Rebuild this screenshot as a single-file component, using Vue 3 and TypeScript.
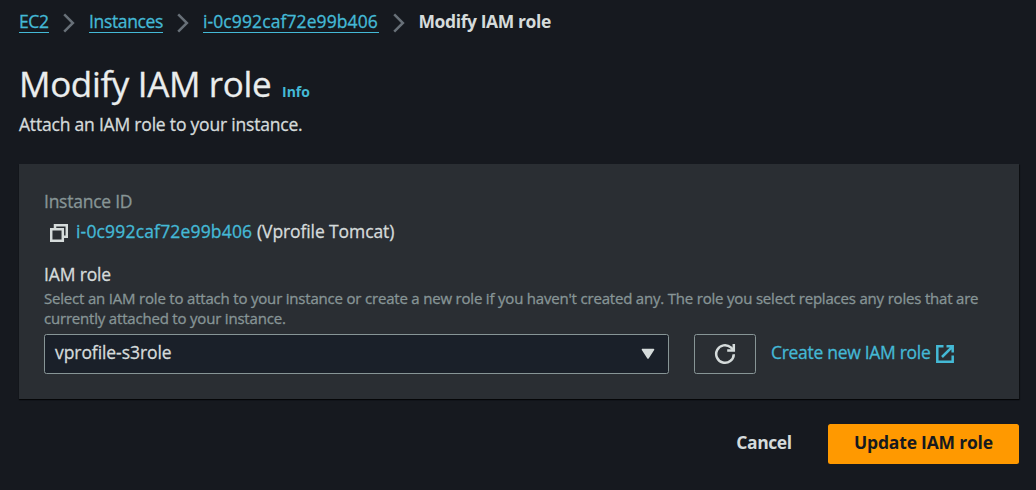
<script setup lang="ts">
import { ref } from 'vue'

interface Crumb {
  label: string
  key: string
}

const instanceId = 'i-0c992caf72e99b406'
const crumbs: Crumb[] = [
  { label: 'EC2', key: 'service' },
  { label: 'Instances', key: 'list' },
  { label: instanceId, key: 'instance' },
]
const selectedRole = ref('vprofile-s3role')
</script>

<template>
  <main class="page">
    <nav class="crumbs">
      <template v-for="crumb in crumbs" :key="crumb.key">
        <a class="crumb" :class="crumb.key">{{ crumb.label }}</a>
        <svg class="chevron" width="12" height="20" viewBox="0 0 12 20">
          <path d="M1.2 1.3 9.9 10 1.2 18.7" />
        </svg>
      </template>
      <span class="current">Modify IAM role</span>
    </nav>

    <header class="heading">
      <h1>Modify IAM role</h1>
      <a class="info">Info</a>
    </header>
    <p class="lead">Attach an IAM role to your instance.</p>

    <section class="panel">
      <div class="label">Instance ID</div>
      <div class="instance-row">
        <svg class="copy" width="18" height="18" viewBox="0 0 18 18">
          <path d="M5 4.5V1.2h11.8v11.6H13.5M1.2 5.2h11.6v11.6H1.2z" />
        </svg>
        <a class="id">{{ instanceId }}</a>
        <span class="name">(Vprofile Tomcat)</span>
      </div>
      <div class="role-label">IAM role</div>
      <p class="hint">
        <span>Select an IAM role to attach to your instance or create a new role if you haven't created any. The role you select replaces any roles that are</span><br />
        <span>currently attached to your instance.</span>
      </p>
      <div class="controls">
        <button class="select" type="button">
          <span class="value">{{ selectedRole }}</span>
          <svg width="14" height="12" viewBox="0 0 14 12">
            <path class="caret" d="M1.5 1.5h11L7 10z" />
          </svg>
        </button>
        <button class="refresh" type="button" aria-label="Refresh">
          <svg width="22" height="22" viewBox="0 0 22 22">
            <path d="M19.8 11.3A8.8 8.8 0 1 1 16.8 4.4L19.5 7.2" />
            <path d="M19.8 1v6.4h-6.6" />
          </svg>
        </button>
        <a class="create">
          <span>Create new IAM role</span>
          <svg width="18" height="18" viewBox="0 0 18 18">
            <path d="M7.5 1.3H1.3v15.4h15.4v-6.2M10.5 1.3h6.2v6.2M16.2 1.8 6 12" />
          </svg>
        </a>
      </div>
    </section>

    <footer class="actions">
      <button class="cancel" type="button">Cancel</button>
      <button class="update" type="button">Update IAM role</button>
    </footer>
  </main>
</template>

<style>
body {
  background: #16191f;
}
</style>

<style scoped>
.page {
  box-sizing: border-box;
  height: 490px;
  padding: 11px 17px 0 19px;
  overflow: hidden;
  background: #16191f;
  color: #d5dbdb;
  font-family: 'Open Sans', 'Noto Sans', sans-serif;
  font-size: 17.5px;
  line-height: 22px;
  white-space: nowrap;
  -webkit-text-stroke: 0.3px currentColor;
}
button {
  font: inherit;
  color: inherit;
  background: none;
  border: 0;
  padding: 0;
}
svg {
  flex: none;
  fill: none;
  stroke: currentColor;
  stroke-width: 2.5;
}
a {
  color: #44b9d6;
}
.crumbs {
  display: flex;
  align-items: flex-start;
  height: 24px;
}
.crumb {
  box-sizing: border-box;
  height: 22px;
  line-height: 21px;
  border-bottom: 1px solid #44b9d6;
}
.service {
  width: 30px;
  letter-spacing: -0.4px;
}
.list {
  width: 74px;
  letter-spacing: -0.35px;
}
.instance {
  width: 175.5px;
  letter-spacing: 0.1px;
}
.chevron {
  margin: 2px 14px 0;
  color: #687078;
}
.current {
  line-height: 21px;
  font-weight: 700;
  letter-spacing: -0.4px;
  -webkit-text-stroke: 0;
}
.heading {
  display: flex;
  align-items: baseline;
  height: 50px;
  margin-top: 24px;
}
h1 {
  margin: 0;
  width: 263px;
  font-size: 35px;
  font-weight: 400;
  line-height: 50px;
  letter-spacing: -0.35px;
  color: #eaeded;
}
.info {
  font-size: 14px;
  line-height: 20px;
  font-weight: 700;
  -webkit-text-stroke: 0;
}
.lead {
  margin: 4px 0 0;
  height: 22px;
  letter-spacing: -0.2px;
}
.panel {
  box-sizing: border-box;
  width: 1000px;
  height: 235px;
  margin-top: 29px;
  padding: 26px 25px 0;
  background: #2a2e33;
  box-shadow: 0 1px 1px rgba(0, 0, 0, 0.6), 1px 1px 1px rgba(0, 0, 0, 0.35);
}
.label {
  color: #879596;
  letter-spacing: -0.25px;
}
.instance-row {
  display: flex;
  align-items: center;
  height: 22px;
  margin-top: 8px;
}
.copy {
  margin: 3px 8px 0 6px;
}
.id {
  width: 181px;
  letter-spacing: 0.17px;
}
.name {
  letter-spacing: -0.1px;
}
.role-label {
  margin-top: 21px;
  letter-spacing: -0.15px;
}
.hint {
  margin: 3px 0 0;
  height: 40px;
  font-size: 15px;
  line-height: 20px;
  letter-spacing: -0.195px;
  color: #879596;
}
.controls {
  display: flex;
  align-items: center;
  margin-top: 6px;
}
.select,
.refresh {
  box-sizing: border-box;
  display: flex;
  align-items: center;
  height: 40px;
  border: 1px solid #879596;
  border-radius: 2.5px;
}
.select {
  justify-content: space-between;
  width: 625px;
  padding: 0 13px 4px 10px;
  background: #1a2029;
}
.value {
  letter-spacing: -0.07px;
}
.select svg {
  margin-top: 4px;
}
.caret {
  fill: #d5dbdb;
  stroke-width: 1.6;
  stroke-linejoin: round;
}
.refresh {
  justify-content: center;
  width: 62px;
  margin-left: 25px;
}
.create {
  display: flex;
  align-items: center;
  margin: -4px 0 0 15px;
}
.create span {
  width: 165px;
  letter-spacing: -0.3px;
}
.create svg {
  margin-top: 4px;
}
.actions {
  display: flex;
  justify-content: flex-end;
  margin-top: 25px;
  -webkit-text-stroke: 0;
}
.cancel,
.update {
  height: 40px;
  padding-bottom: 4px;
  font-weight: 700;
}
.cancel {
  width: 56px;
  margin-right: 36px;
  letter-spacing: -0.4px;
}
.update {
  width: 191px;
  border-radius: 2.5px;
  background: #ff9900;
  color: #16191f;
  letter-spacing: -0.2px;
}
</style>
